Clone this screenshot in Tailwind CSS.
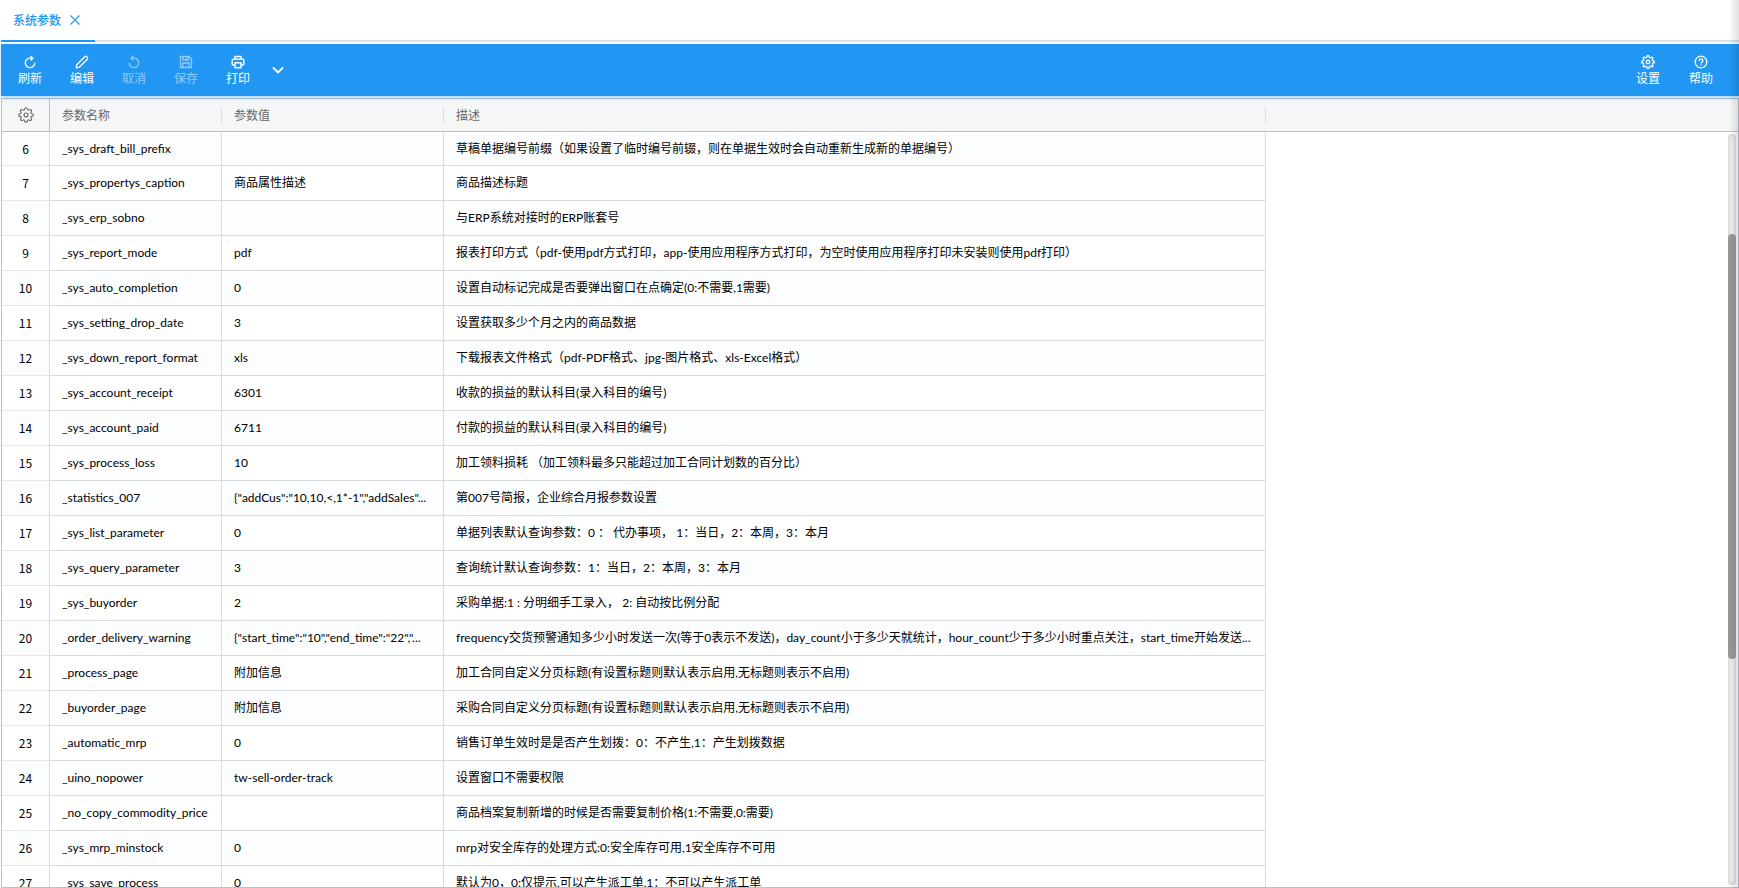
<!DOCTYPE html>
<html lang="zh-CN">
<head>
  <meta charset="UTF-8">
  <meta name="viewport" content="width=device-width, initial-scale=1.0">
  <title>系统参数</title>
  <script src="https://cdn.jsdelivr.net/npm/@tailwindcss/browser@4"></script>
</head>
<body class="h-screen overflow-hidden bg-white pl-px font-[Lato,'Noto_Sans_CJK_SC',sans-serif] text-xs text-black">
  <svg class="hidden">
    <symbol id="gear" viewBox="0 0 24 24" fill="none" stroke="currentColor">
      <circle cx="12" cy="12" r="3"/>
      <path d="M19.4 15a1.65 1.65 0 0 0 .33 1.82l.06.06a2 2 0 0 1 0 2.83 2 2 0 0 1-2.83 0l-.06-.06a1.65 1.65 0 0 0-1.82-.33 1.65 1.65 0 0 0-1 1.51V21a2 2 0 0 1-2 2 2 2 0 0 1-2-2v-.09A1.65 1.65 0 0 0 9 19.4a1.65 1.65 0 0 0-1.82.33l-.06.06a2 2 0 0 1-2.83 0 2 2 0 0 1 0-2.83l.06-.06a1.65 1.65 0 0 0 .33-1.82 1.65 1.65 0 0 0-1.51-1H3a2 2 0 0 1-2-2 2 2 0 0 1 2-2h.09A1.65 1.65 0 0 0 4.6 9a1.65 1.65 0 0 0-.33-1.82l-.06-.06a2 2 0 0 1 0-2.83 2 2 0 0 1 2.83 0l.06.06a1.65 1.65 0 0 0 1.82.33H9a1.65 1.65 0 0 0 1-1.51V3a2 2 0 0 1 2-2 2 2 0 0 1 2 2v.09a1.65 1.65 0 0 0 1 1.51 1.65 1.65 0 0 0 1.82-.33l.06-.06a2 2 0 0 1 2.83 0 2 2 0 0 1 0 2.83l-.06.06a1.65 1.65 0 0 0-.33 1.82V9a1.65 1.65 0 0 0 1.51 1H21a2 2 0 0 1 2 2 2 2 0 0 1-2 2h-.09a1.65 1.65 0 0 0-1.51 1z"/>
    </symbol>
  </svg>

  <div class="relative flex h-full flex-col">

    <!-- tabs -->
    <nav class="flex h-[42px] shrink-0 border-b-2 border-[#dcdfe6]">
      <div class="flex h-[42px] items-center gap-2 border-b-2 border-[#2196f3] pr-3.5 pl-3 text-[#2196f3]">
        <a href="#" class="pt-px font-medium">系统参数</a>
        <button type="button" aria-label="关闭">
          <svg class="size-3" viewBox="0 0 12 12" fill="none" stroke="currentColor" stroke-width="1.1"><path d="M1.5 1.5l9 9M10.5 1.5l-9 9"/></svg>
        </button>
      </div>
    </nav>

    <!-- toolbar -->
    <header class="relative z-10 mt-0.5 flex h-[52px] shrink-0 items-stretch bg-[#2196f3] pr-3 pl-[3px] text-white shadow-[0_2px_4px_rgba(33,150,243,0.4)]">
      <button type="button" class="flex w-13 flex-col items-center pt-[11px]">
        <svg class="size-3.5" viewBox="0 0 14 14" fill="none" stroke="currentColor" stroke-width="1.3"><path d="M9.6 3.2H6.8A4.7 4.7 0 1 0 11.7 7.6M7.6.9l2.3 2.3-2.3 2.3"/></svg>
        <span class="leading-5">刷新</span>
      </button>
      <button type="button" class="flex w-13 flex-col items-center pt-[11px]">
        <svg class="size-3.5" viewBox="0 0 14 14" fill="none" stroke="currentColor" stroke-width="1.3" stroke-linejoin="round"><path d="M1.2 12.8l.6-3.1 8-8q.9-.8 1.8 0l.7.7q.8.9 0 1.8l-8 8z"/></svg>
        <span class="leading-5">编辑</span>
      </button>
      <button type="button" disabled class="flex w-13 flex-col items-center pt-[11px] text-white/50">
        <svg class="size-3.5" viewBox="0 0 14 14" fill="none" stroke="currentColor" stroke-width="1.3"><path d="M4.4 3.2H7.2A4.7 4.7 0 1 1 2.3 7.6M6.4.9L4.1 3.2l2.3 2.3"/></svg>
        <span class="leading-5">取消</span>
      </button>
      <button type="button" disabled class="flex w-13 flex-col items-center pt-[11px] text-white/50">
        <svg class="size-3.5" viewBox="0 0 14 14" fill="none" stroke="currentColor" stroke-width="1.3" stroke-linejoin="round"><path d="M1.5 1.5H10l2.5 2.5v8.5h-11zM4 1.5V5h5.5V1.5M3.8 12.5V8h6.4v4.5M7.5 2.5V4"/></svg>
        <span class="leading-5">保存</span>
      </button>
      <button type="button" class="flex w-13 flex-col items-center pt-[11px]">
        <svg class="size-3.5" viewBox="0 0 14 14" fill="none" stroke="currentColor" stroke-width="1.4" stroke-linejoin="round"><path d="M4 4.2V1.5h6v2.7M4 10H2.2q-1 0-1-1V5.2q0-1 1-1h9.600q1 0 1 1V9q0 1-1 1H10M4 7.8h6v4.9H4z"/></svg>
        <span class="leading-5">打印</span>
      </button>
      <button type="button" aria-label="更多" class="flex w-7 items-center justify-center">
        <svg class="size-3" viewBox="0 0 12 12" fill="none" stroke="currentColor" stroke-width="1.8"><path d="M1 3.5l5 5 5-5"/></svg>
      </button>
      <div class="ml-auto flex gap-px">
        <button type="button" class="flex w-13 flex-col items-center pt-[11px]">
          <svg class="size-3.5" stroke-width="2.2"><use href="#gear"/></svg>
          <span class="leading-5">设置</span>
        </button>
        <button type="button" class="flex w-13 flex-col items-center pt-[11px]">
          <svg class="size-3.5" viewBox="0 0 14 14" fill="none" stroke="currentColor" stroke-width="1.3"><circle cx="7" cy="7" r="5.8"/><path d="M5.2 5.7a1.8 1.8 0 1 1 2.6 1.6q-.8.4-.8 1.1M7 9.3v1.2"/></svg>
          <span class="leading-5">帮助</span>
        </button>
      </div>
    </header>

    <!-- grid -->
    <main class="relative mt-0.5 min-h-0 flex-1 overflow-hidden border border-[#babfc7]">
      <table class="w-full table-fixed border-separate border-spacing-0 text-left">
        <colgroup>
          <col class="w-12">
          <col class="w-[172px]">
          <col class="w-[222px]">
          <col class="w-[822px]">
          <col>
        </colgroup>
        <thead class="bg-[#f5f7f7] text-[#666]">
          <tr class="h-[33px]">
            <th class="border-r border-b border-[#babfc7] p-0">
              <button type="button" aria-label="列设置" class="flex w-full justify-center">
                <svg class="size-4" stroke-width="1.6"><use href="#gear"/></svg>
              </button>
            </th>
            <th class="border-b border-[#babfc7] p-0 font-normal"><div class="h-4 border-r border-[#d9dcde] pl-3 leading-[18px]">参数名称</div></th>
            <th class="border-b border-[#babfc7] p-0 font-normal"><div class="h-4 border-r border-[#d9dcde] pl-3 leading-[18px]">参数值</div></th>
            <th class="border-b border-[#babfc7] p-0 font-normal"><div class="h-4 border-r border-[#d9dcde] pl-3 leading-[18px]">描述</div></th>
            <th class="border-b border-[#babfc7] p-0"></th>
          </tr>
        </thead>
        <tbody id="rows"></tbody>
      </table>

      <!-- scrollbar -->
      <div class="absolute top-[35px] right-0.5 bottom-0.5 w-2 rounded-full bg-[#f0f0f0] shadow-[inset_0_0_4px_rgba(0,0,0,0.2)]">
        <div class="mt-[100px] h-[425px] rounded-full bg-[#999]"></div>
      </div>
    </main>

    <div class="pointer-events-none absolute inset-y-0 right-0 z-20 w-2.5 bg-linear-to-l from-black/12 to-transparent"></div>
  </div>

  <script>
    const params = [
      [6, '_sys_draft_bill_prefix', '', '草稿单据编号前缀（如果设置了临时编号前辍，则在单据生效时会自动重新生成新的单据编号）'],
      [7, '_sys_propertys_caption', '商品属性描述', '商品描述标题'],
      [8, '_sys_erp_sobno', '', '与ERP系统对接时的ERP账套号'],
      [9, '_sys_report_mode', 'pdf', '报表打印方式（pdf-使用pdf方式打印，app-使用应用程序方式打印，为空时使用应用程序打印未安装则使用pdf打印）'],
      [10, '_sys_auto_completion', '0', '设置自动标记完成是否要弹出窗口在点确定(0:不需要,1需要)'],
      [11, '_sys_setting_drop_date', '3', '设置获取多少个月之内的商品数据'],
      [12, '_sys_down_report_format', 'xls', '下载报表文件格式（pdf-PDF格式、jpg-图片格式、xls-Excel格式）'],
      [13, '_sys_account_receipt', '6301', '收款的损益的默认科目(录入科目的编号)'],
      [14, '_sys_account_paid', '6711', '付款的损益的默认科目(录入科目的编号)'],
      [15, '_sys_process_loss', '10', '加工领料损耗 （加工领料最多只能超过加工合同计划数的百分比）'],
      [16, '_statistics_007', '{"addCus":"10,10,<,1*-1","addSales"...', '第007号简报，企业综合月报参数设置'],
      [17, '_sys_list_parameter', '0', '单据列表默认查询参数：0 ： 代办事项， 1：当日，2：本周，3：本月'],
      [18, '_sys_query_parameter', '3', '查询统计默认查询参数：1：当日，2：本周，3：本月'],
      [19, '_sys_buyorder', '2', '采购单据:1 : 分明细手工录入， 2: 自动按比例分配'],
      [20, '_order_delivery_warning', '{"start_time":"10","end_time":"22","...', 'frequency交货预警通知多少小时发送一次(等于0表示不发送)，day_count小于多少天就统计，hour_count少于多少小时重点关注，start_time开始发送...'],
      [21, '_process_page', '附加信息', '加工合同自定义分页标题(有设置标题则默认表示启用,无标题则表示不启用)'],
      [22, '_buyorder_page', '附加信息', '采购合同自定义分页标题(有设置标题则默认表示启用,无标题则表示不启用)'],
      [23, '_automatic_mrp', '0', '销售订单生效时是是否产生划拨：0：不产生,1：产生划拨数据'],
      [24, '_uino_nopower', 'tw-sell-order-track', '设置窗口不需要权限'],
      [25, '_no_copy_commodity_price', '', '商品档案复制新增的时候是否需要复制价格(1:不需要,0:需要)'],
      [26, '_sys_mrp_minstock', '0', 'mrp对安全库存的处理方式:0:安全库存可用,1安全库存不可用'],
      [27, '_sys_save_process', '0', '默认为0，0:仅提示,可以产生派工单,1：不可以产生派工单'],
    ];

    const escape = s => s.replace(/&/g, '&amp;').replace(/</g, '&lt;');

    document.getElementById('rows').innerHTML = params.map(([no, name, value, desc]) => `
      <tr class="group h-[35px] first:h-[34px]">
        <td class="border-r border-b border-r-[#d9dcde] border-b-[#e8e8e8] p-0 text-center font-['Noto_Sans_CJK_SC',sans-serif] group-odd:bg-[#fcfdfe]">${no}</td>
        <td class="overflow-hidden border-r border-b border-[#d9dcde] py-0 pr-0 pl-3 whitespace-nowrap group-odd:bg-[#fcfdfe]">${name}</td>
        <td class="overflow-hidden border-r border-b border-[#d9dcde] py-0 pr-0 pl-3 whitespace-nowrap group-odd:bg-[#fcfdfe]">${escape(value)}</td>
        <td class="overflow-hidden border-r border-b border-[#d9dcde] py-0 pr-0 pl-3 whitespace-nowrap group-odd:bg-[#fcfdfe]">${desc}</td>
        <td class="p-0"></td>
      </tr>
    `).join('');
  </script>
</body>
</html>
